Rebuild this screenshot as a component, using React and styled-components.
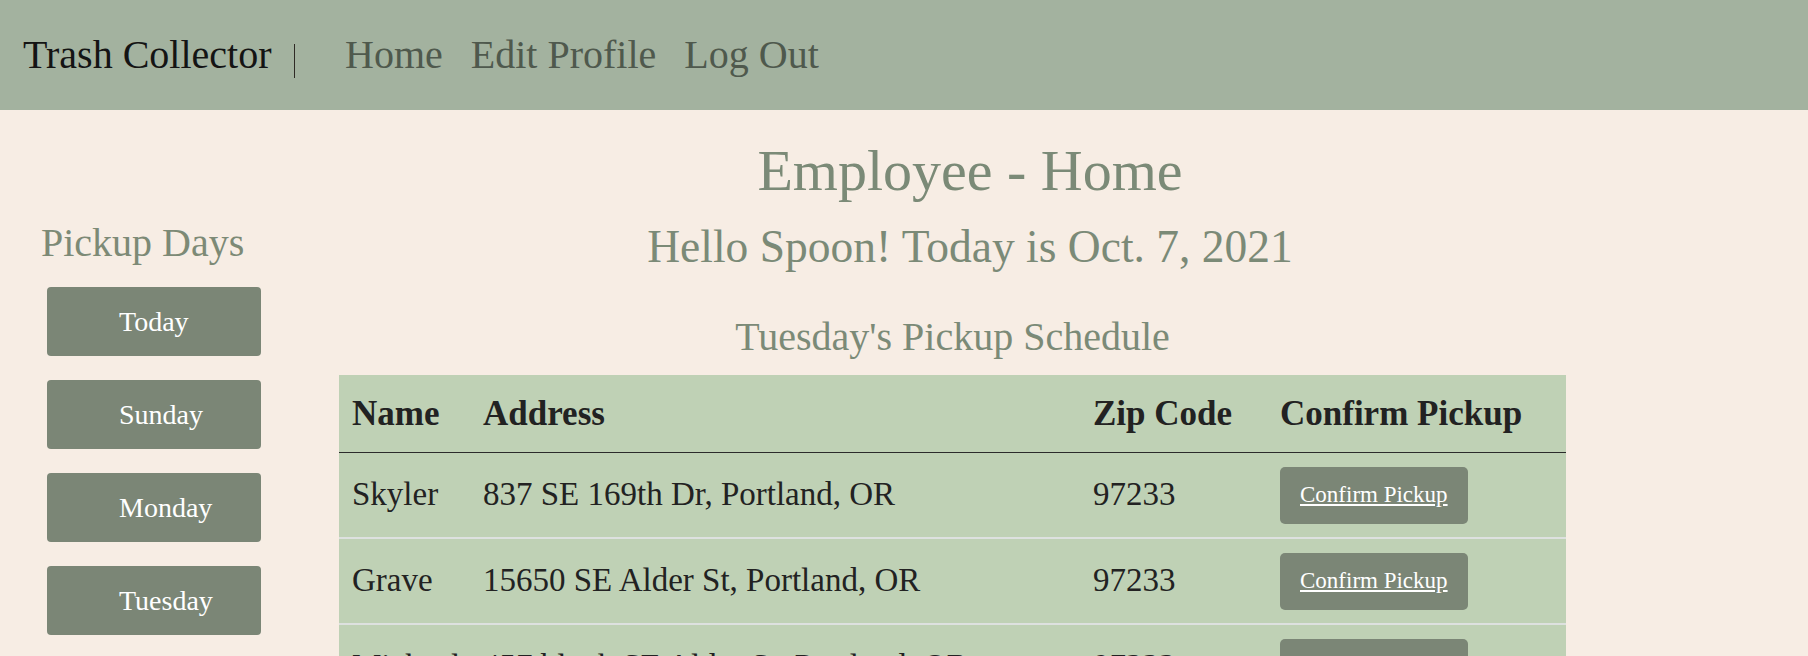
import React from 'react';
import styled, { createGlobalStyle } from 'styled-components';

const GlobalStyle = createGlobalStyle`
  body {
    margin: 0;
    background: #f7ede4;
    font-family: "Liberation Serif", "Times New Roman", serif;
  }
`;

const NavBar = styled.nav`
  display: flex;
  align-items: center;
  height: 110px;
  padding-left: 23px;
  background: #a3b29f;
  line-height: 1.2;
  font-size: 40px;
`;

const Brand = styled.span`
  color: #141414;
`;

const Divider = styled.span`
  width: 1.5px;
  height: 34px;
  margin: 12px 50px 0 22px;
  background: #2f2a25;
`;

const NavLinks = styled.div`
  display: flex;
  gap: 28px;

  a {
    color: #4f594d;
    text-decoration: none;
  }
`;

const Layout = styled.div`
  display: flex;
  align-items: flex-start;
`;

const Sidebar = styled.aside`
  width: 300px;
  flex-shrink: 0;
  padding-top: 109px;

  h2 {
    margin: 0 0 20px 41px;
    font-size: 40px;
    font-weight: normal;
    line-height: 1.2;
    color: #7d8a76;
  }
`;

const DayList = styled.div`
  display: flex;
  flex-direction: column;
  gap: 24px;
  padding-left: 47px;
`;

const DayButton = styled.button`
  width: 214px;
  height: 69px;
  padding: 0 0 0 72px;
  border: none;
  border-radius: 4px;
  background: #7b8676;
  color: #fff;
  font-family: inherit;
  font-size: 28px;
  text-align: left;
`;

const Main = styled.main`
  width: 1340px;
  padding-top: 26px;
  text-align: center;
  line-height: 1.2;
  color: #7b8a77;

  h1 {
    margin: 0;
    font-size: 58px;
    font-weight: normal;
  }

  h3 {
    margin: 14px 0 0;
    font-size: 45.5px;
    font-weight: normal;
  }
`;

const Schedule = styled.section`
  width: 1227px;
  margin: 39px 0 0 39px;

  h4 {
    margin: 0 0 14px;
    font-size: 40px;
    font-weight: normal;
  }
`;

const Table = styled.table`
  width: 100%;
  border-collapse: collapse;
  table-layout: fixed;
  background: #bfd1b5;
  color: #222;
  text-align: left;
  line-height: 1.2;

  th,
  td {
    padding: 0 13px;
    vertical-align: middle;
  }

  th {
    height: 77px;
    font-size: 35px;
    border-bottom: 1px solid #2b2b2b;
  }

  td {
    height: 84px;
    font-size: 33px;
    border-bottom: 2px solid #dde1df;
  }
`;

const ConfirmLink = styled.a`
  display: inline-flex;
  align-items: center;
  height: 57px;
  padding: 0 20px;
  border-radius: 5px;
  background: #7b8676;
  color: #fff;
  font-size: 23px;
  text-decoration: underline;
`;

const days = ['Today', 'Sunday', 'Monday', 'Tuesday'];

const pickups = [
  { id: 1, name: 'Skyler', address: '837 SE 169th Dr, Portland, OR', zip: '97233' },
  { id: 2, name: 'Grave', address: '15650 SE Alder St, Portland, OR', zip: '97233' },
  { id: 3, name: 'Michael', address: '457 block SE Alder St, Portland, OR', zip: '97233' },
];

const App = () => (
  <>
    <GlobalStyle />
    <NavBar>
      <Brand>Trash Collector</Brand>
      <Divider />
      <NavLinks>
        <a href="#home">Home</a>
        <a href="#profile">Edit Profile</a>
        <a href="#logout">Log Out</a>
      </NavLinks>
    </NavBar>
    <Layout>
      <Sidebar>
        <h2>Pickup Days</h2>
        <DayList>
          {days.map(day => (
            <DayButton key={day}>{day}</DayButton>
          ))}
        </DayList>
      </Sidebar>
      <Main>
        <h1>Employee - Home</h1>
        <h3>Hello Spoon! Today is Oct. 7, 2021</h3>
        <Schedule>
          <h4>Tuesday's Pickup Schedule</h4>
          <Table>
            <colgroup>
              <col style={{ width: 131 }} />
              <col style={{ width: 610 }} />
              <col style={{ width: 187 }} />
              <col />
            </colgroup>
            <thead>
              <tr>
                <th>Name</th>
                <th>Address</th>
                <th>Zip Code</th>
                <th>Confirm Pickup</th>
              </tr>
            </thead>
            <tbody>
              {pickups.map(p => (
                <tr key={p.id}>
                  <td>{p.name}</td>
                  <td>{p.address}</td>
                  <td>{p.zip}</td>
                  <td>
                    <ConfirmLink href={`#confirm-${p.id}`}>Confirm Pickup</ConfirmLink>
                  </td>
                </tr>
              ))}
            </tbody>
          </Table>
        </Schedule>
      </Main>
    </Layout>
  </>
);

export default App;
